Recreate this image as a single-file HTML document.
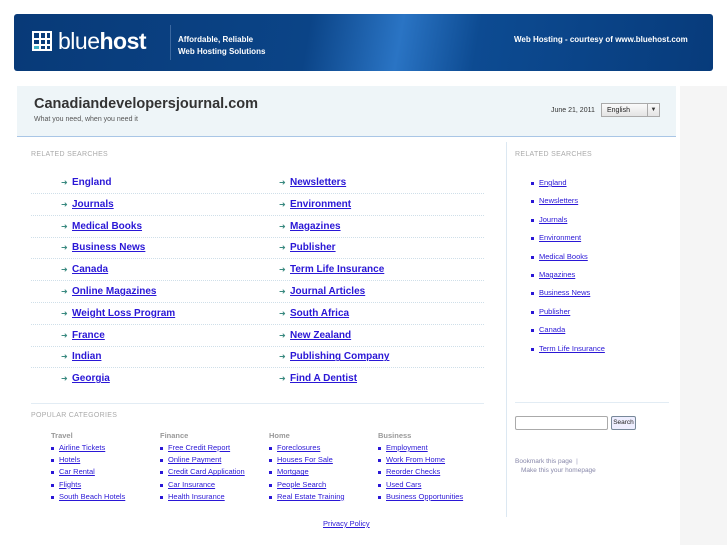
<!DOCTYPE html>
<html><head><style>
*{margin:0;padding:0;box-sizing:border-box}
body{width:727px;height:545px;background:#fff;font-family:"Liberation Sans",Arial,sans-serif;position:relative;overflow:hidden}
.a{position:absolute;white-space:nowrap}
a{color:#2a17d6;text-decoration:underline}
.banner{left:14px;top:14px;width:699px;height:57px;border-radius:3px;background:linear-gradient(100deg,#083a78 0%,#0b4487 42%,#2a74c4 55%,#0d4b92 66%,#073b7b 100%)}
.strip{left:680px;top:86px;width:47px;height:459px;background:#f5f5f5}
.hdr{left:17px;top:86px;width:659px;height:51px;background:#eef5f8;border-bottom:1px solid #a9c6e6}
.lbl{font-size:7px;color:#aaa;letter-spacing:.3px}
.ml{font-size:10px;font-weight:bold}
.arr{font-size:8px;color:#3a8a80}
.sep{left:31px;width:453px;border-top:1px dotted #cfdfe9;height:0}
.sl{font-size:7.5px}
.dot{width:3px;height:3px;background:#2a17d6;position:absolute}
.ch{font-size:7.5px;font-weight:bold;color:#999}
</style></head><body>
<div class="a banner"></div>
<div class="a" style="left:32px;top:31px;width:20px;height:20px;border:2px solid #fff;background:linear-gradient(#fff,#fff) 5px 0/2px 100% no-repeat,linear-gradient(#fff,#fff) 11px 0/2px 100% no-repeat,linear-gradient(#fff,#fff) 0 5px/100% 2px no-repeat,linear-gradient(#fff,#fff) 0 11px/100% 2px no-repeat,linear-gradient(#3fb4c8,#3fb4c8) 0 11px/7px 7px no-repeat"></div>
<div class="a" style="left:58px;top:28px;font-size:23px;color:#fff;letter-spacing:-.5px">blue<span style="font-weight:600">host</span></div>
<div class="a" style="left:170px;top:25px;width:1px;height:35px;background:#3b68a0"></div>
<div class="a" style="left:178px;top:34px;font-size:8px;font-weight:bold;color:#fff;line-height:12px">Affordable, Reliable<br>Web Hosting Solutions</div>
<div class="a" style="left:514px;top:35px;font-size:8px;font-weight:bold;color:#fff">Web Hosting - courtesy of www.bluehost.com</div>
<div class="a strip"></div>
<div class="a hdr"></div>
<div class="a" style="left:34px;top:96px;font-size:14.5px;font-weight:bold;color:#333">Canadiandevelopersjournal.com</div>
<div class="a" style="left:34px;top:116px;font-size:7px;color:#555">What you need, when you need it</div>
<div class="a" style="left:551px;top:107px;font-size:7px;color:#333">June 21, 2011</div>
<div class="a" style="left:601px;top:103px;width:59px;height:14px;border:1px solid #aaa;background:linear-gradient(#fafafa,#e4e4e4);font-size:7px;padding:3px 5px;color:#222">English</div>
<div class="a" style="left:647px;top:104px;width:12px;height:12px;border-left:1px solid #aaa;font-size:6px;text-align:center;line-height:12px;color:#333">▼</div>
<div class="a" style="left:506px;top:142px;width:1px;height:375px;background:#dce8f2"></div>
<div class="a lbl" style="left:31px;top:151px">RELATED SEARCHES</div>
<div class="a lbl" style="left:515px;top:151px">RELATED SEARCHES</div>
<div id="ml"></div>
<div class="a" style="left:31px;top:403px;width:453px;border-top:1px solid #e2ecf4"></div>
<div class="a" style="left:515px;top:402px;width:154px;border-top:1px solid #e2ecf4"></div>
<div class="a lbl" style="left:31px;top:412px">POPULAR CATEGORIES</div>
<div class="a" style="left:515px;top:416px;width:93px;height:14px;border:1px solid #aaa;border-radius:2px"></div>
<div class="a" style="left:611px;top:416px;width:25px;height:14px;border:1px solid #789;border-radius:2px;background:#eef;font-size:6.5px;text-align:center;line-height:12px;color:#222">Search</div>
<div class="a" style="left:515px;top:458px;font-size:6.5px;color:#88a">Bookmark this page &nbsp;<span style="color:#99b">|</span></div>
<div class="a" style="left:521px;top:467px;font-size:6.5px;color:#88a">Make this your homepage</div>
<div class="a sl" style="left:323px;top:519px"><a>Privacy Policy</a></div>
<script>
var L=["England","Journals","Medical Books","Business News","Canada","Online Magazines","Weight Loss Program","France","Indian","Georgia"];
var R=["Newsletters","Environment","Magazines","Publisher","Term Life Insurance","Journal Articles","South Africa","New Zealand","Publishing Company","Find A Dentist"];
var h="";
for(var i=0;i<10;i++){var y=177+i*21.8;
h+='<div class="a arr" style="left:61px;top:'+(y+1)+'px">➜</div><div class="a ml" style="left:72px;top:'+y+'px"><a'+(i==0?' style="text-decoration:none"':'')+'>'+L[i]+'</a></div>';
h+='<div class="a arr" style="left:279px;top:'+(y+1)+'px">➜</div><div class="a ml" style="left:290px;top:'+y+'px"><a>'+R[i]+'</a></div>';
if(i<9)h+='<div class="a sep" style="top:'+(y+16)+'px"></div>';}
var S=["England","Newsletters","Journals","Environment","Medical Books","Magazines","Business News","Publisher","Canada","Term Life Insurance"];
for(var i=0;i<10;i++){var y=178+i*18.4;h+='<div class="dot" style="left:531px;top:'+(y+4)+'px"></div><div class="a sl" style="left:539px;top:'+y+'px"><a>'+S[i]+'</a></div>';}
var C=[["Travel","Airline Tickets","Hotels","Car Rental","Flights","South Beach Hotels"],["Finance","Free Credit Report","Online Payment","Credit Card Application","Car Insurance","Health Insurance"],["Home","Foreclosures","Houses For Sale","Mortgage","People Search","Real Estate Training"],["Business","Employment","Work From Home","Reorder Checks","Used Cars","Business Opportunities"]];
for(var c=0;c<4;c++){var x=51+c*109;h+='<div class="a ch" style="left:'+x+'px;top:431px">'+C[c][0]+'</div>';
for(var j=1;j<6;j++){var y=443+(j-1)*12.2;h+='<div class="dot" style="left:'+x+'px;top:'+(y+4)+'px"></div><div class="a sl" style="left:'+(x+8)+'px;top:'+y+'px"><a>'+C[c][j]+'</a></div>';}}
document.getElementById("ml").outerHTML=h;
</script>
</body></html>
